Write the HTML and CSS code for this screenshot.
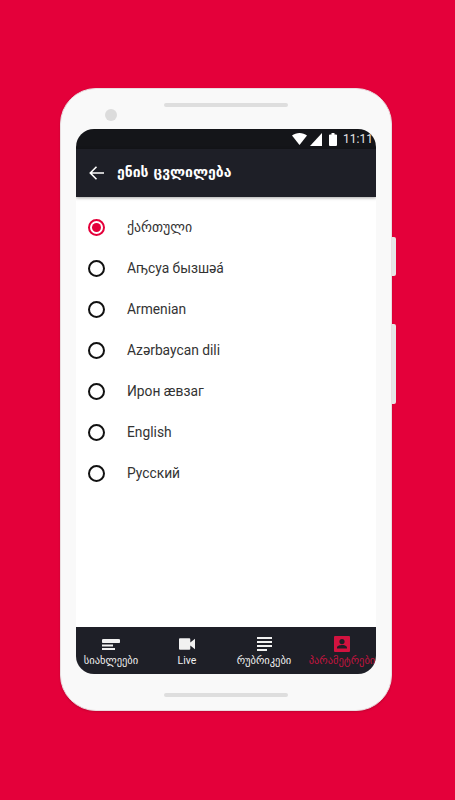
FILE: index.html
```html
<!DOCTYPE html>
<html lang="ka">
<head>
    <meta charset="UTF-8">
    <meta name="viewport" content="width=device-width, initial-scale=1.0">
    <title>ენის ცვლილება</title>
    <link rel="stylesheet" href="styles.css">
</head>
<body>
    <div class="phone">
        <span class="side-btn side-btn-power"></span>
        <span class="side-btn side-btn-volume"></span>

        <div class="phone-top">
            <span class="camera"></span>
            <span class="speaker"></span>
        </div>

        <div class="screen">
            <div class="status-bar">
                <svg class="status-wifi" width="15" height="12" viewBox="0 0 16 12" preserveAspectRatio="none"><path d="M0 2.600C2.200 .9 5 0 8 0s5.800 .9 8 2.600L8 12z" fill="#fff"/></svg>
                <svg class="status-signal" width="12" height="13" viewBox="0 0 13 13" preserveAspectRatio="none"><path d="M13 0v13H0z" fill="#fff"/></svg>
                <svg class="status-battery" width="8" height="13" viewBox="0 0 8 14" preserveAspectRatio="none"><path d="M2.500 0h3v1.500H7a1 1 0 0 1 1 1V13a1 1 0 0 1-1 1H1a1 1 0 0 1-1-1V2.500a1 1 0 0 1 1-1h1.500z" fill="#fff"/></svg>
                <span class="clock">11:11</span>
            </div>

            <header class="app-bar">
                <svg class="back" width="15" height="14" viewBox="0 0 15 14"><path d="M15 7H1.500M7.500 .8L1.300 7l6.200 6.200" fill="none" stroke="#fff" stroke-width="1.600"/></svg>
                <h1 class="title">ენის ცვლილება</h1>
            </header>

            <ul class="lang-list">
                <li class="lang-row selected"><span class="radio"></span>ქართული</li>
                <li class="lang-row"><span class="radio"></span>Аҧсуа бызшәа́</li>
                <li class="lang-row"><span class="radio"></span>Armenian</li>
                <li class="lang-row"><span class="radio"></span>Azərbaycan dili</li>
                <li class="lang-row"><span class="radio"></span>Ирон æвзаг</li>
                <li class="lang-row"><span class="radio"></span>English</li>
                <li class="lang-row"><span class="radio"></span>Русский</li>
            </ul>

            <nav class="tabs">
                <div class="tab">
                    <span class="tab-icon"><svg width="18" height="11" viewBox="0 0 18 11"><path d="M1.500 0h15a1.500 1.500 0 0 1 0 4h-15a1.500 1.500 0 0 1 0-4zM0 5.500h11v2H0zM0 9h13v2H0z" fill="#f1f1f1"/></svg></span>
                    <span>სიახლეები</span>
                </div>
                <div class="tab">
                    <span class="tab-icon"><svg width="16" height="12" viewBox="0 0 17 12"><path d="M1 0h10a1 1 0 0 1 1 1v3.500L17 .500v11l-5-4V11a1 1 0 0 1-1 1H1a1 1 0 0 1-1-1V1a1 1 0 0 1 1-1z" fill="#f1f1f1"/></svg></span>
                    <span>Live</span>
                </div>
                <div class="tab">
                    <span class="tab-icon"><svg width="15" height="14" viewBox="0 0 15 14"><path d="M0 0h15v2H0zM0 4h15v2H0zM0 8h15v2H0zM0 12h10v2H0z" fill="#f1f1f1"/></svg></span>
                    <span>რუბრიკები</span>
                </div>
                <div class="tab active">
                    <span class="tab-icon"><svg width="16" height="16" viewBox="0 0 16 16"><path fill-rule="evenodd" d="M1 0h14a1 1 0 0 1 1 1v14a1 1 0 0 1-1 1H1a1 1 0 0 1-1-1V1a1 1 0 0 1 1-1zm7 3a2.600 2.600 0 1 0 0 5.200A2.600 2.600 0 0 0 8 3zm-5 9.500h10v-1c0-1.800-3.300-2.500-5-2.500s-5 .7-5 2.500z" fill="#d2123f"/></svg></span>
                    <span>პარამეტრები</span>
                </div>
            </nav>
        </div>

        <div class="phone-bottom">
            <span class="speaker"></span>
        </div>
    </div>
</body>
</html>
```

FILE: styles.css
```css
* {
    box-sizing: border-box;
}

body {
    margin: 0;
    height: 800px;
    overflow: hidden;
    background-color: #e4003a;
    font-family: Roboto, "DejaVu Sans", sans-serif;
}

.phone {
    position: relative;
    width: 332px;
    height: 623px;
    margin: 88px 0 0 60px;
    padding: 0 15px;
    background-color: #f9f9f9;
    border: 1px solid #eadde0;
    border-radius: 36px;
    box-shadow: 0 1px 2px rgba(120, 0, 30, 0.3);
}

.side-btn {
    position: absolute;
    right: -5px;
    width: 4px;
    background-color: #e6e6e6;
    border-radius: 0 2px 2px 0;
}

.side-btn-power {
    top: 148px;
    height: 39px;
}

.side-btn-volume {
    top: 235px;
    height: 80px;
}

.phone-top {
    position: relative;
    height: 40px;
    display: flex;
    justify-content: center;
    padding-top: 14px;
}

.camera {
    position: absolute;
    left: 29px;
    top: 20px;
    width: 12px;
    height: 12px;
    border-radius: 50%;
    background-color: #dcdcdc;
}

.speaker {
    display: block;
    width: 124px;
    height: 4px;
    border-radius: 2px;
    background-color: #dedede;
}

.screen {
    width: 300px;
    height: 545px;
    display: flex;
    flex-direction: column;
    background-color: #fff;
    border-radius: 18px;
    overflow: hidden;
}

.status-bar {
    height: 20px;
    flex: none;
    display: flex;
    align-items: center;
    justify-content: flex-end;
    padding-right: 3px;
    background-color: #141519;
    color: #e6e6e6;
    font-size: 12px;
}

.status-signal {
    margin-left: 3px;
}

.status-battery {
    margin-left: 7px;
}

.clock {
    margin-left: 6px;
}

.app-bar {
    height: 48px;
    flex: none;
    display: flex;
    align-items: center;
    gap: 13px;
    padding-left: 13px;
    background-color: #1e1f27;
    box-shadow: 0 1px 3px rgba(0, 0, 0, 0.35);
    position: relative;
}

.title {
    margin: 0 0 2px;
    color: #fff;
    font-family: "DejaVu Sans", sans-serif;
    font-size: 14px;
    font-weight: bold;
}

.lang-list {
    flex: 1;
    list-style: none;
    margin: 0;
    padding: 9px 0 0;
}

.lang-row {
    height: 41px;
    display: flex;
    align-items: center;
    gap: 22px;
    padding-left: 12px;
    font-size: 13.800px;
    color: #333;
}

.radio {
    width: 17px;
    height: 17px;
    flex: none;
    margin-top: 2px;
    border: 2px solid #111;
    border-radius: 50%;
    display: flex;
    align-items: center;
    justify-content: center;
}

.selected .radio {
    border-color: #e4003a;
}

.selected .radio::after {
    content: "";
    width: 9px;
    height: 9px;
    border-radius: 50%;
    background-color: #e4003a;
}

.tabs {
    height: 47px;
    flex: none;
    display: grid;
    grid-template-columns: 70px 82px 72px 84px;
    padding-top: 9px;
    background-color: #1e1f27;
}

.tab {
    display: flex;
    flex-direction: column;
    align-items: center;
    gap: 2px;
    color: #f1f1f1;
    font-size: 10.500px;
    white-space: nowrap;
}

.tab-icon {
    height: 16px;
    display: flex;
    align-items: center;
}

.tab.active {
    color: #c3143f;
}

.phone-bottom {
    display: flex;
    justify-content: center;
    padding-top: 19px;
}
```
